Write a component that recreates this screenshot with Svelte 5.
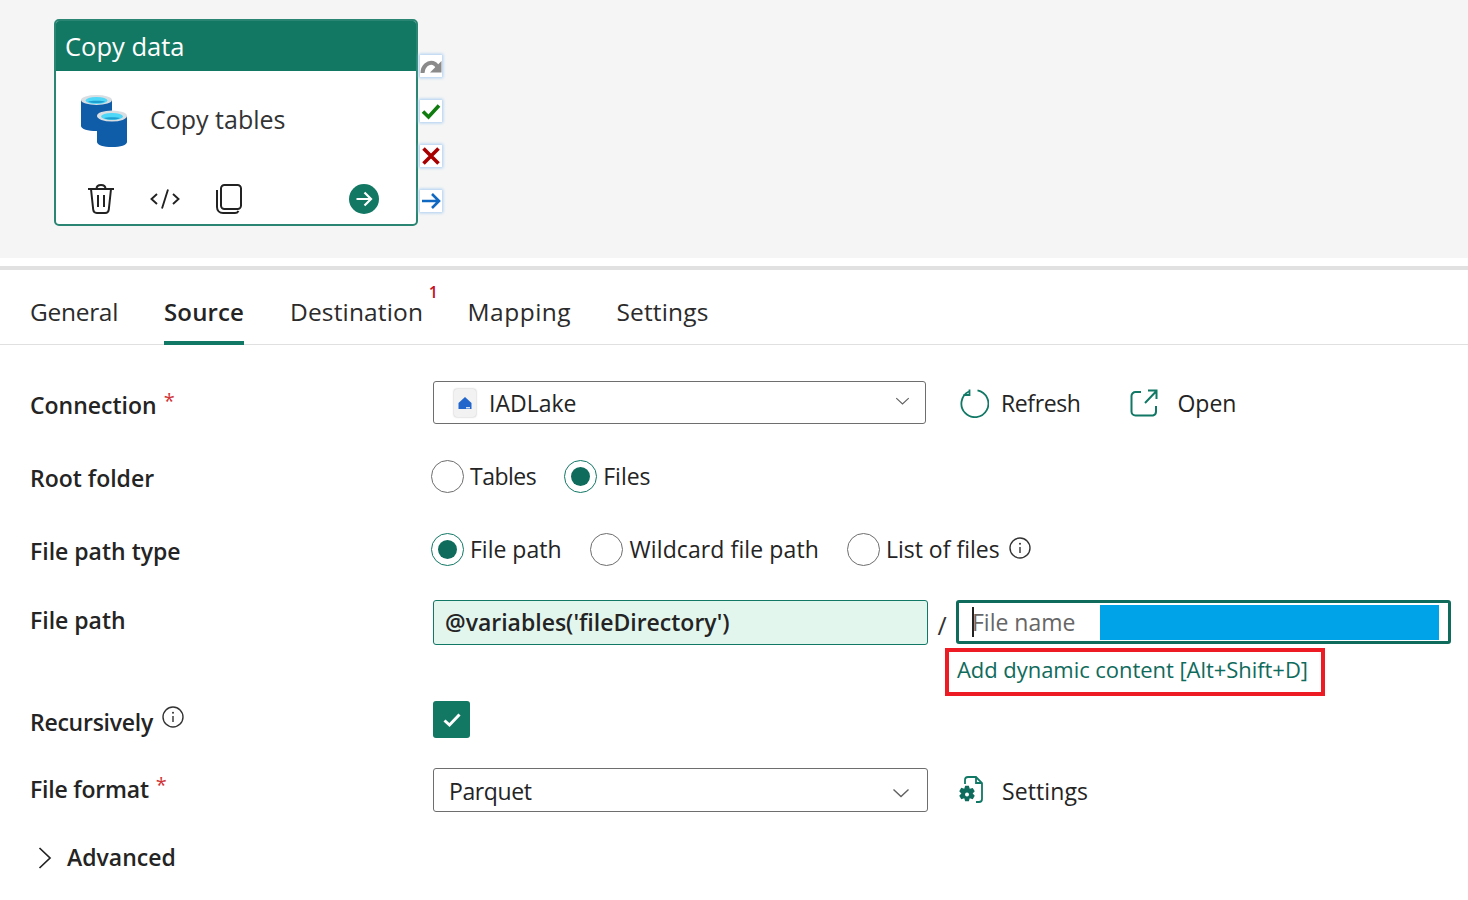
<script>
  const tabs = [
    { name: 'General' },
    { name: 'Source', active: true },
    { name: 'Destination', badge: '1' },
    { name: 'Mapping' },
    { name: 'Settings' }
  ];
</script>

{#snippet info()}
  <svg class="info" viewBox="0 0 22 22" width="22" height="22" aria-hidden="true">
    <circle cx="11" cy="11" r="10" fill="none" stroke="#333" stroke-width="1.4" />
    <circle cx="11" cy="6.8" r="1" fill="#333" />
    <path d="M11 10v6" stroke="#333" stroke-width="1.4" fill="none" />
  </svg>
{/snippet}

{#snippet chevron()}
  <svg class="chev" viewBox="0 0 18 10" width="18" height="10" aria-hidden="true">
    <path d="M1.500 1.500 9 8.500l7.500-7" fill="none" stroke="#616161" stroke-width="1.400" />
  </svg>
{/snippet}

<div class="page">
  <section class="canvas">
    <div class="node">
      <header class="node-head">Copy data</header>
      <div class="node-main">
        <svg class="db" viewBox="80 94 48 54" width="48" height="54" aria-hidden="true">
          <path d="M81 100v26c0 3 7 5 15.500 5s15.500-2 15.500-5v-26z" fill="#0f5ca8" />
          <ellipse cx="96.500" cy="100" rx="15.500" ry="5" fill="#d8dee2" />
          <ellipse cx="96.500" cy="100.500" rx="11" ry="3.500" fill="#50d8f8" />
          <path d="M88 101.500c2-1 15-1 17 0-3 2-14 2-17 0z" fill="#1e9fd0" />
          <path d="M97 116v26c0 3 6.500 5 15 5s15-2 15-5v-26z" fill="#0f5ca8" />
          <ellipse cx="112" cy="116" rx="15" ry="5.500" fill="#d8dee2" />
          <ellipse cx="112" cy="116.500" rx="11" ry="3.500" fill="#50d8f8" />
          <path d="M104 118c2-1 14-1 16 0-3 2-13 2-16 0z" fill="#1e9fd0" />
        </svg>
        <span class="node-title">Copy tables</span>
      </div>
      <div class="node-actions">
        <svg class="a-trash" viewBox="0 0 28 30" width="28" height="30" aria-hidden="true">
          <path d="M1 5h26M9.500 5c0-2.500 2-4 4.500-4s4.500 1.500 4.500 4M4 5l2.200 20.500c.2 2 1.600 3.500 3.600 3.500h8.400c2 0 3.400-1.500 3.600-3.500L24 5M11 11v12M17 11v12" fill="none" stroke="#222" stroke-width="2" />
        </svg>
        <svg class="a-code" viewBox="0 0 30 22" width="30" height="22" aria-hidden="true">
          <path d="M7 6 1.500 11 7 16M23 6l5.500 5L23 16M18 1.500 12 20.500" fill="none" stroke="#222" stroke-width="1.900" />
        </svg>
        <svg class="a-copy" viewBox="0 0 28 30" width="28" height="30" aria-hidden="true">
          <rect x="6" y="1" width="20" height="24" rx="3.500" fill="none" stroke="#222" stroke-width="2" />
          <path d="M2 6v17c0 3.500 2.500 6 6 6h12c1.500 0 2.800-.8 3.500-2" fill="none" stroke="#222" stroke-width="2" />
        </svg>
        <svg class="a-go" viewBox="0 0 30 30" width="30" height="30" aria-hidden="true">
          <circle cx="15" cy="15" r="15" fill="#137863" />
          <path d="M7.500 15h14M15.500 8.500l6.500 6.500-6.500 6.500" fill="none" stroke="#fff" stroke-width="2.200" />
        </svg>
      </div>
    </div>
    <div class="ports">
      <div class="port">
        <svg viewBox="0 0 22 22" width="22" height="22" aria-hidden="true">
          <path d="M2.500 18C2.500 11 8 6.800 13 8c2 .5 3.500 2 4.500 4" fill="none" stroke="#8a8a8a" stroke-width="4" />
          <path d="M21.500 6v11.500H10z" fill="#8a8a8a" />
        </svg>
      </div>
      <div class="port">
        <svg viewBox="0 0 22 22" width="22" height="22" aria-hidden="true">
          <path d="M3 11.500 8.500 17 19 5.500" fill="none" stroke="#107c10" stroke-width="3.600" />
        </svg>
      </div>
      <div class="port">
        <svg viewBox="0 0 22 22" width="22" height="22" aria-hidden="true">
          <path d="M3.500 3.500l15 15M18.500 3.500l-15 15" fill="none" stroke="#a80000" stroke-width="3.600" />
        </svg>
      </div>
      <div class="port">
        <svg viewBox="0 0 22 22" width="22" height="22" aria-hidden="true">
          <path d="M2 11h17M12 4l7 7-7 7" fill="none" stroke="#1068c0" stroke-width="2.600" />
        </svg>
      </div>
    </div>
  </section>

  <div class="divider"></div>

  <nav class="tabs">
    {#each tabs as t}
      <div class="tab" class:active={t.active}>
        {t.name}
        {#if t.badge}<span class="badge">{t.badge}</span>{/if}
      </div>
    {/each}
  </nav>

  <main class="form">
    <div class="row r-conn">
      <div class="label l-conn">Connection <span class="req">*</span></div>
      <div class="field select s-conn">
        <span class="lake">
          <svg viewBox="0 0 16 16" width="16" height="16" aria-hidden="true">
            <path d="M1.500 8 8 2 14.500 8v6h-13z" fill="#2266cc" />
            <path d="M9 12h4v1.500H9z" fill="#cfe0f5" />
          </svg>
        </span>
        <span class="sel-text conn-text">IADLake</span>
        {@render chevron()}
      </div>
      <div class="cmd c-refresh">
        <svg viewBox="0 0 30 30" width="30" height="30" aria-hidden="true">
          <path d="M10 3.500A13.500 13.500 0 1 0 18.500 2.400" fill="none" stroke="#117865" stroke-width="1.800" />
          <path d="M10.500 1.500v5.500h-6" fill="none" stroke="#117865" stroke-width="1.800" />
        </svg>
        <span class="refresh-text">Refresh</span>
      </div>
      <div class="cmd c-open">
        <svg viewBox="0 0 28 28" width="28" height="28" aria-hidden="true">
          <path d="M11 3H5.500A4 4 0 0 0 1.500 7v15.500a4 4 0 0 0 4 4H23a4 4 0 0 0 3-4V17" fill="none" stroke="#117865" stroke-width="2" />
          <path d="M15 14 26 2.500M18 1.500h8.500V10" fill="none" stroke="#117865" stroke-width="2" />
        </svg>
        Open
      </div>
    </div>

    <div class="row r-root">
      <div class="label l-root">Root folder</div>
      <div class="radios">
        <label class="radio"><span class="dot"></span><span class="tables">Tables</span></label>
        <label class="radio"><span class="dot on"></span>Files</label>
      </div>
    </div>

    <div class="row r-type">
      <div class="label l-type">File path type</div>
      <div class="radios">
        <label class="radio"><span class="dot on"></span>File path</label>
        <label class="radio"><span class="dot"></span><span class="wild">Wildcard file path</span></label>
        <label class="radio">
          <span class="dot"></span><span class="list">List of files</span>
          <span class="info-up">{@render info()}</span>
        </label>
      </div>
    </div>

    <div class="row r-path">
      <div class="label l-path">File path</div>
      <div class="path-block">
        <div class="path-line">
          <div class="dir">@variables('fileDirectory')</div>
          <span class="slash">/</span>
          <div class="file">
            <span class="caret"></span>
            <span class="ph">File name</span>
            <span class="redact"></span>
          </div>
        </div>
        <div class="dynamic">Add dynamic content [Alt+Shift+D]</div>
      </div>
    </div>

    <div class="row r-rec">
      <div class="label l-rec"><span class="rec-text">Recursively</span> <span class="info-label">{@render info()}</span></div>
      <div class="check">
        <svg viewBox="0 0 20 20" width="20" height="20" aria-hidden="true">
          <path d="M2.500 10.500 7.500 15 17.500 4.500" fill="none" stroke="#fff" stroke-width="3" />
        </svg>
      </div>
    </div>

    <div class="row r-fmt">
      <div class="label l-fmt"><span class="fmt-text">File format</span> <span class="req">*</span></div>
      <div class="field select s-fmt">
        <span class="sel-text parquet">Parquet</span>
        {@render chevron()}
      </div>
      <div class="cmd c-set">
        <svg viewBox="0 0 26 28" width="26" height="28" aria-hidden="true">
          <path d="M7 8V4a3 3 0 0 1 3-3h8l6 6v16a3 3 0 0 1-3 3h-3M18 1v6h6" fill="none" stroke="#117865" stroke-width="1.800" />
          <g transform="translate(9 18.500) scale(1.250) translate(-9.500 -17.500)">
            <path d="M8 10.500h3l.7 2.400 2.400-.7 1.600 2.700-1.700 1.800 1.700 1.800-1.600 2.700-2.400-.7-.7 2.400H8l-.7-2.400-2.400.7-1.600-2.700 1.700-1.800-1.700-1.800 1.600-2.700 2.400.7z" fill="#0f6b5c" />
            <circle cx="9.500" cy="17.500" r="1.600" fill="#fff" />
          </g>
        </svg>
        <span class="set-text">Settings</span>
      </div>
    </div>

    <div class="row r-adv">
      <svg viewBox="0 0 14 24" width="14" height="24" aria-hidden="true">
        <path d="M1.500 2 12 12 1.500 22" fill="none" stroke="#222" stroke-width="1.700" />
      </svg>
      <span class="adv-text">Advanced</span>
    </div>
  </main>
</div>

<style>
  :global(body) {
    margin: 0;
    background: #fff;
  }
  .page {
    width: 1468px;
    height: 900px;
    overflow: hidden;
    font-family: "Open Sans", "Noto Sans", sans-serif;
    font-size: 23px;
    color: #242424;
    background: #fff;
  }
  .canvas {
    height: 258px;
    box-sizing: border-box;
    background: #f5f5f5;
    padding: 19px 0 0 54px;
    display: flex;
  }
  .node {
    width: 364px;
    height: 207px;
    box-sizing: border-box;
    border: 2px solid #2a8673;
    border-radius: 5px;
    background: #fff;
    overflow: hidden;
    display: flex;
    flex-direction: column;
  }
  .node-head {
    height: 50px;
    flex: none;
    background: #137863;
    color: #fff;
    font-size: 25.500px;
    line-height: 51px;
    padding-left: 9px;
  }
  .node-main {
    display: flex;
    align-items: center;
    padding: 23px 0 0 24px;
    height: 54px;
    flex: none;
  }
  .node-title {
    margin-left: 22px;
    font-size: 25px;
    color: #333;
    position: relative;
    top: -2px;
  }
  .node-actions {
    display: flex;
    align-items: center;
    padding: 36px 0 0 31px;
  }
  .a-code { margin-left: 35px; }
  .a-copy { margin-left: 35px; }
  .a-go { margin-left: 106px; }
  .ports {
    margin: 36px 0 0 2px;
    display: flex;
    flex-direction: column;
    gap: 23px;
  }
  .port {
    width: 22px;
    height: 22px;
    background: #fff;
    box-shadow: 0 0 3px 1px #a8cdf0;
    display: flex;
    align-items: center;
    justify-content: center;
  }
  .divider {
    height: 4px;
    margin-top: 8px;
    background: #e1e1e1;
  }
  .tabs {
    height: 75px;
    box-sizing: border-box;
    border-bottom: 1px solid #e0e0e0;
    padding-left: 30px;
    display: grid;
    grid-template-columns: 134px 126px 177.500px 149px auto;
    justify-items: start;
  }
  .tab {
    position: relative;
    height: 75px;
    box-sizing: border-box;
    padding-top: 26px;
    line-height: 32px;
    font-size: 24.500px;
    letter-spacing: 0.15px;
    color: #2b2b2b;
    white-space: nowrap;
  }
  .tab:first-child {
    letter-spacing: -0.3px;
  }
  .tab:nth-child(4) {
    letter-spacing: 0.5px;
  }
  .tab.active {
    font-weight: 600;
    font-size: 24px;
    letter-spacing: 0.15px;
    color: #242424;
    border-bottom: 4px solid #117865;
  }
  .badge {
    position: absolute;
    top: 12px;
    right: -15px;
    font-size: 16px;
    font-weight: 600;
    line-height: 20px;
    color: #c50f1f;
  }
  .form {
    padding-left: 30px;
  }
  .row {
    display: flex;
    align-items: flex-start;
    position: relative;
  }
  .label {
    width: 403px;
    flex: none;
    font-weight: 600;
    color: #242424;
    line-height: 32px;
    white-space: nowrap;
  }
  .req {
    color: #d13438;
    font-weight: 400;
    font-size: 20px;
    vertical-align: 6px;
    margin-left: 1px;
  }
  .r-conn { margin-top: 36px; height: 43px; }
  .r-root { margin-top: 35px; height: 36px; }
  .r-type { margin-top: 37px; height: 36px; }
  .r-path { margin-top: 32px; height: 101px; }
  .r-rec { margin-top: 0; height: 37px; }
  .r-fmt { margin-top: 30px; height: 44px; }
  .r-adv { margin-top: 32px; height: 28px; align-items: center; padding-left: 8px; }

  .l-conn { padding-top: 4px; }
  .l-root { padding-top: 3px; }
  .l-type { padding-top: 3px; }
  .l-path { padding-top: 4px; }
  .l-rec { padding-top: 5px; }
  .l-fmt { padding-top: 1px; }
  .rec-text { letter-spacing: -0.25px; }
  .fmt-text { letter-spacing: -0.2px; }

  .field {
    box-sizing: border-box;
    border: 1px solid #6e6e6e;
    border-radius: 3px;
    background: #fff;
  }
  .select {
    display: flex;
    align-items: center;
    position: relative;
    flex: none;
  }
  .s-conn {
    width: 493px;
    height: 43px;
    padding-left: 20px;
  }
  .s-fmt {
    width: 495px;
    height: 44px;
    padding-left: 15px;
  }
  .lake {
    width: 22px;
    height: 28px;
    box-sizing: border-box;
    background: #f2f2f2;
    border-radius: 3px;
    box-shadow: 0 0 2px #aaa;
    display: flex;
    align-items: center;
    justify-content: center;
    margin-right: 13px;
  }
  .sel-text { color: #242424; line-height: 30px; }
  .parquet { letter-spacing: -0.4px; position: relative; top: 1px; }
  .chev { margin-left: auto; margin-right: 14px; }
  .s-conn .chev { width: 15px; margin-right: 15px; position: relative; top: -2px; }
  .s-fmt .chev { margin-right: 17px; position: relative; top: 3px; }
  .cmd {
    display: flex;
    align-items: center;
    color: #242424;
    line-height: 30px;
    flex: none;
  }
  .c-refresh { margin-left: 33px; gap: 12px; height: 43px; }
  .refresh-text { letter-spacing: -0.4px; }
  .c-open { margin-left: 50px; gap: 19px; height: 43px; }
  .c-set { margin-left: 30px; gap: 18px; height: 44px; }
  .set-text { position: relative; top: 1px; letter-spacing: 0.1px; }

  .radios {
    display: flex;
    gap: 28px;
    margin-left: -2px;
  }
  .radio {
    display: flex;
    align-items: center;
    gap: 6px;
    height: 34px;
    line-height: 34px;
    color: #242424;
    white-space: nowrap;
  }
  .tables { letter-spacing: -0.5px; }
  .wild { letter-spacing: 0.1px; margin-left: 1px; }
  .list { margin-left: 0; }
  .dot {
    width: 33px;
    height: 33px;
    box-sizing: border-box;
    border: 1px solid #6e6e6e;
    border-radius: 50%;
    display: block;
    flex: none;
    position: relative;
  }
  .dot.on {
    border-color: #117865;
  }
  .dot.on::after {
    content: "";
    position: absolute;
    inset: 6px;
    border-radius: 50%;
    background: #0f6b5c;
  }
  .info-up { margin-left: 3px; display: flex; position: relative; top: -1px; }
  .info-label { display: inline-block; vertical-align: 3px; line-height: 0; margin-left: 3px; }

  .path-block {
    width: 1018px;
    flex: none;
  }
  .path-line {
    display: flex;
    align-items: flex-start;
    height: 45px;
  }
  .dir {
    box-sizing: border-box;
    width: 495px;
    height: 45px;
    border: 1px solid #117865;
    border-radius: 3px;
    background: #e3f6ee;
    padding-left: 11px;
    line-height: 43px;
    font-weight: 600;
    color: #242424;
    white-space: nowrap;
  }
  .slash {
    width: 28px;
    height: 45px;
    text-align: center;
    line-height: 50px;
    font-size: 25px;
    color: #333;
  }
  .file {
    box-sizing: border-box;
    width: 495px;
    height: 44px;
    border: 3px solid #0f6b5c;
    border-radius: 3px;
    position: relative;
    padding-left: 13px;
    line-height: 39px;
    color: #666;
    white-space: nowrap;
  }
  .caret {
    position: absolute;
    left: 13px;
    top: 4px;
    width: 2px;
    height: 30px;
    background: #222;
  }
  .redact {
    position: absolute;
    left: 141px;
    top: 2px;
    width: 339px;
    height: 35px;
    background: #00a2e8;
  }
  .dynamic {
    box-sizing: border-box;
    margin: 3px 0 0 512px;
    width: 380px;
    height: 48px;
    border: 4px solid #ed1c24;
    padding-left: 8px;
    line-height: 35px;
    font-size: 22px;
    letter-spacing: -0.05px;
    color: #0f6b5c;
    white-space: nowrap;
  }
  .check {
    width: 37px;
    height: 37px;
    border-radius: 3px;
    background: #137863;
    display: flex;
    align-items: center;
    justify-content: center;
  }
  .adv-text {
    margin-left: 15px;
    font-weight: 600;
    color: #242424;
    position: relative;
    top: -1px;
  }
</style>
